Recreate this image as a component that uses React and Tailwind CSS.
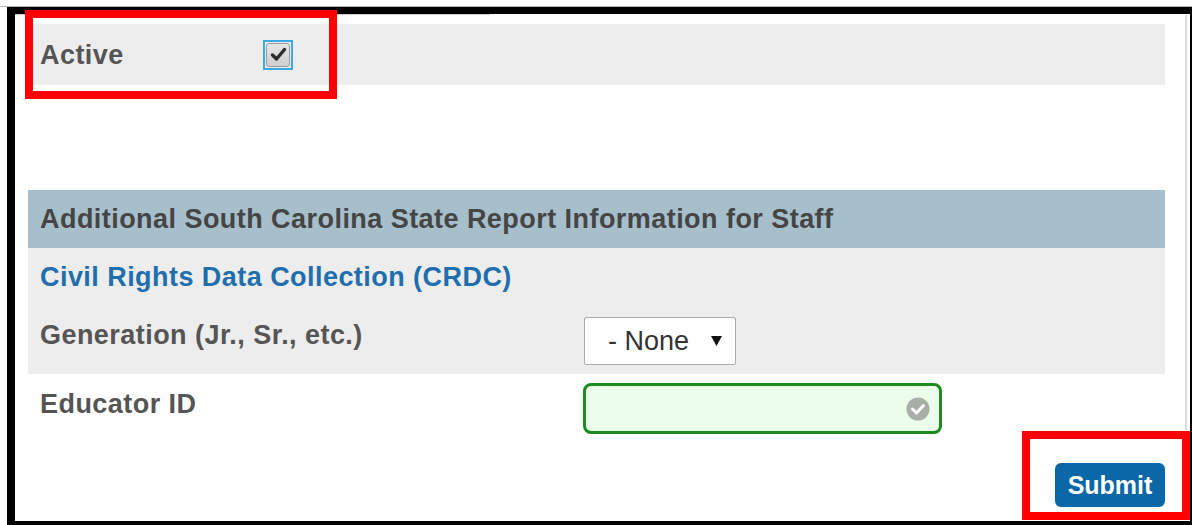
import React from 'react';

const font = { fontFamily: '"Liberation Sans", Arial, sans-serif' };

function Checkbox() {
  return (
    <div className="w-[30px] h-[30px] border-2 border-[#3aa9e6] flex items-center justify-center">
      <div className="w-[24px] h-[24px] rounded-[3px] border border-[#9a9a9a] bg-gradient-to-b from-[#e6e6e6] to-[#cfcfcf] flex items-center justify-center">
        <svg width="17" height="15" viewBox="0 0 17 15">
          <path d="M2.5 8 L6.5 12 L14.5 2.5" fill="none" stroke="#2b2b2b" strokeWidth="3.4" strokeLinecap="round" strokeLinejoin="round" />
        </svg>
      </div>
    </div>
  );
}

function ValidIcon() {
  return (
    <svg width="24" height="24" viewBox="0 0 24 24">
      <circle cx="12" cy="12" r="11.5" fill="#a7afa7" />
      <path d="M6.5 12.2 L10.5 16 L17.5 8.5" fill="none" stroke="#fff" strokeWidth="3" strokeLinecap="round" strokeLinejoin="round" />
    </svg>
  );
}

export default function App() {
  return (
    <div style={font} className="relative w-[1192px] h-[525px] bg-white overflow-hidden">
      <div className="mt-[6px] border-t border-[#bdbdbd]">
        <div className="ml-[7px] h-[518px] border-l-[8px] border-t-[7px] border-r-[2px] border-b-[4px] border-black">
          <div className="h-px w-[475px] bg-[#c9c9c9]"></div>
          <div className="flex h-[503px]">
            <div className="ml-[13px] w-[1137px] flex flex-col tracking-[0.45px]">
              {/* Active flag */}
              <div className="mt-[9px] h-[61px] bg-[#ededed] flex items-center pl-[12px]">
                <span className="w-[223px] text-[27px] leading-[30px] font-bold text-[#555]">Active</span>
                <Checkbox />
              </div>

              {/* State report section */}
              <div className="mt-[105px] h-[58px] bg-[#a6bfcb] flex items-center pl-[12px]">
                <span className="text-[27px] leading-[30px] font-bold text-[#454545]">
                  Additional South Carolina State Report Information for Staff
                </span>
              </div>
              <div className="h-[57px] bg-[#ededed] flex items-center pl-[12px]">
                <span className="text-[27px] leading-[30px] font-bold text-[#1f6ead]">
                  Civil Rights Data Collection (CRDC)
                </span>
              </div>
              <div className="h-[69px] bg-[#ededed] flex items-start pl-[12px]">
                <span className="w-[544px] pt-[15px] text-[27px] leading-[30px] font-bold text-[#555]">
                  Generation (Jr., Sr., etc.)
                </span>
                <div className="mt-[12px] w-[152px] h-[48px] bg-white border border-[#a9a9a9] rounded-[2px] flex items-center pl-[23px] pr-[13px] justify-between tracking-normal">
                  <span className="text-[27px] leading-[30px] text-[#333]">- None</span>
                  <svg width="11" height="10" viewBox="0 0 11 10">
                    <path d="M0 0 H11 L5.5 10 Z" fill="#111" />
                  </svg>
                </div>
              </div>
              <div className="h-[70px] flex items-start pl-[12px]">
                <span className="w-[543px] pt-[15px] text-[27px] leading-[30px] font-bold text-[#555]">Educator ID</span>
                <div className="mt-[9px] w-[359px] h-[51px] rounded-[8px] border-[3px] border-[#1d8a1d] bg-[#ebfdeb] flex items-center justify-end pr-[9px]">
                  <ValidIcon />
                </div>
              </div>

              <div className="mt-[19px] flex justify-end">
                <button className="w-[110px] h-[44px] rounded-[6px] bg-[#0b67a7] text-white text-[25px] leading-[30px] font-bold tracking-normal">
                  Submit
                </button>
              </div>
            </div>
            <div className="ml-[20px] w-[2px] bg-[#dcdcdc]"></div>
          </div>
        </div>
      </div>

      {/* highlight annotations */}
      <div className="absolute left-[25px] top-[10px] w-[312px] h-[89px] border-[8px] border-[#ff0000]"></div>
      <div className="absolute left-[1022px] top-[431px] w-[168px] h-[89px] border-[8px] border-[#ff0000]"></div>
    </div>
  );
}
